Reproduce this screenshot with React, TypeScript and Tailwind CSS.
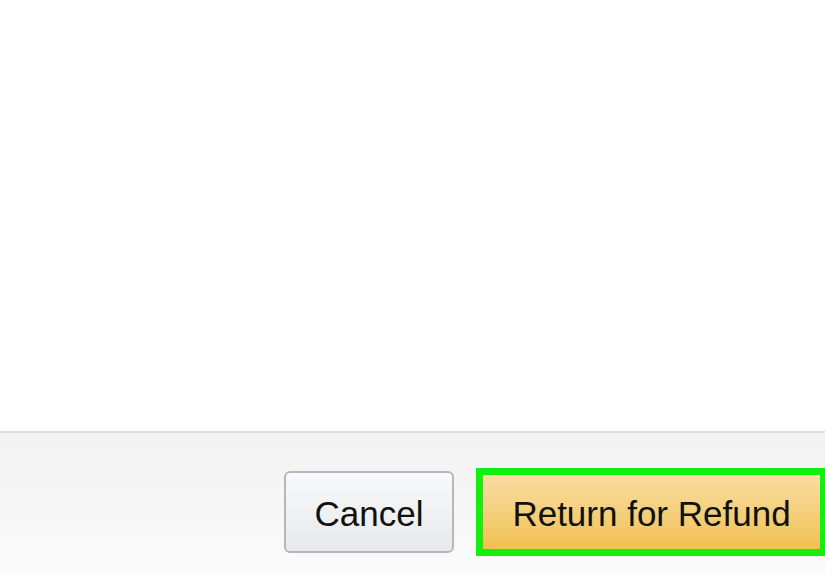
export default function App() {
  return (
    <div className="flex h-[575px] w-[825px] flex-col bg-white font-['Liberation_Sans',Arial,sans-serif]">
      <div className="h-[431px] bg-white" />
      <div className="flex flex-1 items-start justify-end gap-[22px] border-t-2 border-[#dcdcdc] bg-gradient-to-b from-[#f2f2f2] to-[#fbfbfb] pt-[35px]">
        <div className="flex h-[88px] items-center">
          <button className="h-[82px] w-[170px] rounded-[6px] border-2 border-[#b4b7bc] bg-gradient-to-b from-[#f8f9fa] to-[#e8e9ec] pt-[2px] text-[35px] leading-none text-[#111]">
            Cancel
          </button>
        </div>
        <div className="h-[88px] w-[349px] border-[7px] border-r-[5px] border-[#12f012]">
          <button className="flex h-full w-full items-center justify-center bg-gradient-to-b from-[#f8dda2] to-[#f1c14e] pt-[2px] text-[35px] leading-none text-[#111]">
            Return for Refund
          </button>
        </div>
      </div>
    </div>
  );
}
